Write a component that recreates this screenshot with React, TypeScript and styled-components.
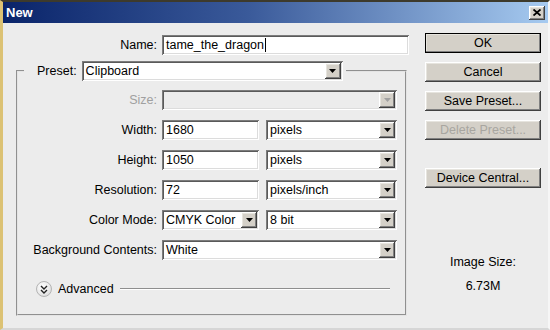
import React from "react";
import styled, { createGlobalStyle } from "styled-components";

const GlobalStyle = createGlobalStyle`
  html, body {
    margin: 0;
    padding: 0;
    background: #ececec;
  }
  body {
    font-family: "Liberation Sans", Arial, sans-serif;
    font-size: 12.5px;
    color: #000;
  }
`;

const raised = `
  box-shadow: inset -1px -1px #404040, inset 1px 1px #ffffff,
    inset -2px -2px #808080, inset 2px 2px #e6e4de;
`;

const sunken = `
  box-shadow: inset 1px 1px #7c7c7c, inset -1px -1px #ffffff,
    inset 2px 2px #5a5a5a, inset -2px -2px #dcdcdc;
`;

const Window = styled.div`
  width: 550px;
  height: 330px;
  box-sizing: border-box;
  display: flex;
  flex-direction: column;
  background: #ececec;
  border-top: 2px solid #3d3a2c;
  border-left: 3px solid #dcc274;
  border-right: 2px solid #f6f6f6;
  border-bottom: 2px solid #d6d6d6;
  overflow: hidden;
`;

const TitleBar = styled.div`
  height: 21px;
  flex: none;
  display: flex;
  align-items: center;
  justify-content: space-between;
  padding: 0 3px 0 3px;
  background: linear-gradient(to right, #0a246a 0%, #3a5a9a 45%, #a6caf0 100%);
`;

const Title = styled.span`
  color: #fff;
  font-weight: bold;
  font-size: 13px;
`;

const CloseButton = styled.div`
  width: 16px;
  height: 14px;
  display: flex;
  align-items: center;
  justify-content: center;
  background: #d4d0c8;
  ${raised}
`;

const Body = styled.div`
  flex: 1;
  display: flex;
  padding-top: 10px;
`;

const LeftPane = styled.div`
  width: 410px;
  display: flex;
  flex-direction: column;
  padding-top: 2px;
`;

const NameRow = styled.div`
  display: flex;
  align-items: center;
  gap: 5px;
`;

const Label = styled.span<{ $width: number; $disabled?: boolean }>`
  width: ${(p) => p.$width}px;
  flex: none;
  text-align: right;
  white-space: nowrap;
  color: ${(p) => (p.$disabled ? "#a0a0a0" : "#000")};
`;

const TextField = styled.div<{ $width: number }>`
  width: ${(p) => p.$width}px;
  height: 20px;
  box-sizing: border-box;
  display: flex;
  align-items: center;
  padding: 0 4px;
  background: #fff;
  ${sunken}
`;

const Caret = styled.span`
  display: inline-block;
  width: 1px;
  height: 14px;
  margin-left: 1px;
  background: #000;
`;

const SelectBox = styled.div<{ $width: number; $disabled?: boolean }>`
  width: ${(p) => p.$width}px;
  height: 20px;
  box-sizing: border-box;
  display: flex;
  align-items: center;
  padding: 2px;
  background: ${(p) => (p.$disabled ? "#ececec" : "#fff")};
  ${sunken}
`;

const SelectText = styled.span`
  flex: 1;
  padding-left: 2px;
  white-space: nowrap;
  overflow: hidden;
`;

const ArrowButton = styled.div`
  width: 16px;
  height: 16px;
  flex: none;
  display: flex;
  align-items: center;
  justify-content: center;
  background: #d4d0c8;
  ${raised}
`;

const Group = styled.fieldset`
  margin: 6px 0 0 13px;
  width: 391px;
  box-sizing: border-box;
  padding: 0 0 17px 6px;
  border: 2px groove #e4e4e4;
  min-width: 0;
`;

const Legend = styled.legend`
  display: flex;
  align-items: center;
  gap: 5px;
  padding: 0 3px 0 13px;
`;

const Rows = styled.div`
  display: flex;
  flex-direction: column;
  gap: 10px;
  padding-top: 9px;
`;

const Row = styled.div`
  display: flex;
  align-items: center;
  gap: 5px;
`;

const Controls = styled.div`
  display: flex;
  gap: 7px;
`;

const AdvancedRow = styled.div`
  display: flex;
  align-items: center;
  margin-top: 21px;
  padding-left: 12px;
  padding-right: 15px;
  height: 16px;
`;

const AdvancedIcon = styled.div`
  width: 16px;
  height: 16px;
  box-sizing: border-box;
  border-radius: 50%;
  border: 1px solid #b4b4b4;
  background: radial-gradient(circle at 40% 35%, #ffffff 0%, #e8e8e8 60%, #cfcfcf 100%);
  display: flex;
  align-items: center;
  justify-content: center;
  flex: none;
`;

const AdvancedText = styled.span`
  margin: 0 6px;
`;

const Rule = styled.div`
  flex: 1;
  height: 0;
  border-top: 1px solid #8e8e8e;
  border-bottom: 1px solid #ffffff;
`;

const RightPane = styled.div`
  width: 116px;
  margin-left: 12px;
  display: flex;
  flex-direction: column;
  align-items: stretch;
  gap: 9px;
`;

const Button = styled.div<{ $default?: boolean; $disabled?: boolean; $gap?: number }>`
  height: 20px;
  box-sizing: border-box;
  display: flex;
  align-items: center;
  justify-content: center;
  background: #d4d0c8;
  color: ${(p) => (p.$disabled ? "#a8a6a0" : "#000")};
  margin-top: ${(p) => p.$gap ?? 0}px;
  ${raised}
  ${(p) => (p.$default ? "outline: 1px solid #000; outline-offset: -1px;" : "")}
`;

const SizeInfo = styled.div`
  margin-top: 58px;
  display: flex;
  flex-direction: column;
  align-items: center;
  gap: 9px;
  line-height: 15px;
`;

function Arrow({ disabled }: { disabled?: boolean }) {
  return (
    <ArrowButton>
      <svg width="7" height="4" viewBox="0 0 7 4">
        <path d="M0 0h7L3.5 4z" fill={disabled ? "#a0a0a0" : "#000"} />
      </svg>
    </ArrowButton>
  );
}

function Select({ width, value, disabled }: { width: number; value?: string; disabled?: boolean }) {
  return (
    <SelectBox $width={width} $disabled={disabled}>
      <SelectText>{value}</SelectText>
      <Arrow disabled={disabled} />
    </SelectBox>
  );
}

export default function App() {
  return (
    <>
      <GlobalStyle />
      <Window>
        <TitleBar>
          <Title>New</Title>
          <CloseButton>
            <svg width="8" height="7" viewBox="0 0 8 7">
              <path d="M0.5 0.5L7.5 6.5M7.5 0.5L0.5 6.5" stroke="#000" strokeWidth="1.8" />
            </svg>
          </CloseButton>
        </TitleBar>
        <Body>
          <LeftPane>
            <NameRow>
              <Label $width={154}>Name:</Label>
              <TextField $width={247}>
                tame_the_dragon
                <Caret />
              </TextField>
            </NameRow>
            <Group>
              <Legend>
                <span>Preset:</span>
                <Select width={261} value="Clipboard" />
              </Legend>
              <Rows>
                <Row>
                  <Label $width={133} $disabled>
                    Size:
                  </Label>
                  <Select width={235} disabled />
                </Row>
                <Row>
                  <Label $width={133}>Width:</Label>
                  <Controls>
                    <TextField $width={97}>1680</TextField>
                    <Select width={131} value="pixels" />
                  </Controls>
                </Row>
                <Row>
                  <Label $width={133}>Height:</Label>
                  <Controls>
                    <TextField $width={97}>1050</TextField>
                    <Select width={131} value="pixels" />
                  </Controls>
                </Row>
                <Row>
                  <Label $width={133}>Resolution:</Label>
                  <Controls>
                    <TextField $width={97}>72</TextField>
                    <Select width={131} value="pixels/inch" />
                  </Controls>
                </Row>
                <Row>
                  <Label $width={133}>Color Mode:</Label>
                  <Controls>
                    <Select width={97} value="CMYK Color" />
                    <Select width={131} value="8 bit" />
                  </Controls>
                </Row>
                <Row>
                  <Label $width={133}>Background Contents:</Label>
                  <Select width={235} value="White" />
                </Row>
              </Rows>
              <AdvancedRow>
                <AdvancedIcon>
                  <svg width="8" height="9" viewBox="0 0 8 9">
                    <path d="M1 1l3 3 3-3M1 5l3 3 3-3" fill="none" stroke="#222" strokeWidth="1.4" />
                  </svg>
                </AdvancedIcon>
                <AdvancedText>Advanced</AdvancedText>
                <Rule />
              </AdvancedRow>
            </Group>
          </LeftPane>
          <RightPane>
            <Button $default>OK</Button>
            <Button>Cancel</Button>
            <Button>Save Preset...</Button>
            <Button $disabled>Delete Preset...</Button>
            <Button $gap={19}>Device Central...</Button>
            <SizeInfo>
              <span>Image Size:</span>
              <span>6.73M</span>
            </SizeInfo>
          </RightPane>
        </Body>
      </Window>
    </>
  );
}
